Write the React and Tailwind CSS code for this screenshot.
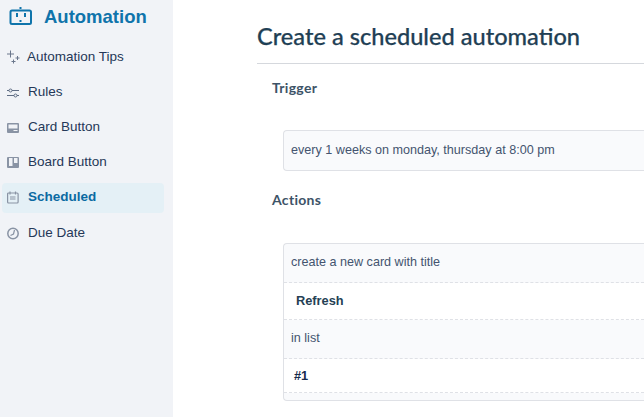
const Sparkle = () => (
  <svg width="14" height="14" viewBox="0 0 14 14" fill="none" stroke="#6b778c" strokeWidth="1">
    <path d="M3.500 0.500v7M0 4h7" />
    <path d="M10.500 6v4M8.500 8h4" />
    <path d="M6.500 9.500v4M4.500 11.500h4" />
  </svg>
);

const Sliders = () => (
  <svg width="14" height="14" viewBox="0 0 14 14" fill="none" stroke="#5e6c84" strokeWidth="1">
    <path d="M0 5.500h2M5 5.500h7M0 10.500h7M10 10.500h2" />
    <circle cx="3.500" cy="5.500" r="1.500" />
    <circle cx="8.500" cy="10.500" r="1.500" />
  </svg>
);

const CardIcon = () => (
  <svg width="13" height="13" viewBox="0 0 13 13">
    <rect x="0" y="2" width="12" height="10" rx="1" fill="#8993a4" />
    <rect x="1.500" y="3.500" width="9" height="4" fill="#f1f3f7" />
    <rect x="6.500" y="9" width="4" height="1" fill="#f1f3f7" />
  </svg>
);

const BoardIcon = () => (
  <svg width="13" height="13" viewBox="0 0 13 13">
    <rect x="0" y="1" width="12" height="11" rx="1" fill="#8993a4" />
    <rect x="2" y="2" width="3.500" height="8" fill="#f1f3f7" />
    <rect x="7" y="2" width="3.500" height="5" fill="#f1f3f7" />
  </svg>
);

const CalendarIcon = () => (
  <svg width="13" height="13" viewBox="0 0 13 13" fill="none" stroke="#8993a4" strokeWidth="1.200">
    <rect x="0.600" y="2" width="10.500" height="10" rx="1" />
    <path d="M3 0.500v3M8.500 0.500v3M3 6h5.500M3 8h5.500" />
  </svg>
);

const ClockIcon = () => (
  <svg width="13" height="13" viewBox="0 0 13 13" fill="none" stroke="#8993a4" strokeWidth="1.500">
    <circle cx="6" cy="6.500" r="5.200" />
    <path d="M7.500 3L6.500 7l-3 1.500" strokeWidth="1.200" />
  </svg>
);

const RobotIcon = () => (
  <svg width="24" height="22" viewBox="0 0 24 22" fill="none" className="self-start mt-[7px]">
    <rect x="10.500" y="0" width="2" height="2" fill="#0f74ab" />
    <rect x="1.500" y="3.500" width="20.500" height="13.500" rx="1.500" stroke="#0f74ab" strokeWidth="2" />
    <rect x="7" y="6" width="2" height="4" fill="#0f74ab" />
    <rect x="15" y="6" width="2" height="4" fill="#0f74ab" />
    <rect x="10.500" y="13" width="2" height="2" fill="#0f74ab" />
  </svg>
);

const navItems = [
  { label: "Automation Tips", icon: Sparkle, gap: "gap-[6px]" },
  { label: "Rules", icon: Sliders, gap: "gap-[7px]" },
  { label: "Card Button", icon: CardIcon, gap: "gap-[8px]" },
  { label: "Board Button", icon: BoardIcon, gap: "gap-[8px]" },
  { label: "Scheduled", icon: CalendarIcon, gap: "gap-[8px]", active: true },
  { label: "Due Date", icon: ClockIcon, gap: "gap-[8px]" },
];

const Sidebar = () => (
  <aside className="w-[173px] h-full shrink-0 bg-[#f1f3f7] pl-[2px] pr-[9px]">
    <div className="flex items-center h-[34px] pl-[7px] gap-[11px]">
      <RobotIcon />
      <span className="text-[18.5px] font-bold text-[#0f74ab]">Automation</span>
    </div>
    <nav className="flex flex-col gap-[5px] mt-[8px]">
      {navItems.map((item) => (
        <div
          key={item.label}
          className={`flex items-center h-[30px] pl-[5px] rounded-[4px] ${item.gap} ${item.active ? "bg-[#e4f0f6] font-bold text-[#0b6aa2] mt-[1px] pb-[1px]" : "text-[#253858]"}`}
        >
          <item.icon />
          <span className="text-[13.5px]">{item.label}</span>
        </div>
      ))}
    </nav>
  </aside>
);

const Row = ({ children, className }) => (
  <div className={`border-b border-dashed border-[#dfe1e6] ${className}`}>{children}</div>
);

export default function App() {
  return (
    <div className="flex w-[644px] h-[417px] overflow-hidden bg-white font-['Liberation_Sans',sans-serif]">
      <Sidebar />
      <main className="flex-1 pl-[84px] min-w-0">
        <h1 className="pt-[20px] h-[64px] border-b border-[#d5d8dd] text-[23.6px] leading-[33px] font-medium [-webkit-text-stroke:0.25px_#1f3f55] text-[#1f3f55] font-['Lato',sans-serif]">
          Create a scheduled automation
        </h1>
        <div className="pl-[15px]">
          <h2 className="mt-[15px] text-[14px] leading-[18px] font-bold tracking-[0.3px] text-[#3d5367] font-['Lato',sans-serif]">Trigger</h2>
          <div className="mt-[33px] ml-[11px] h-[41px] flex items-center pl-[7px] bg-[#f9fafc] border border-[#dfe1e6] border-r-0 rounded-l-[4px] text-[12.6px] text-[#44546f]">
            every 1 weeks on monday, thursday at 8:00 pm
          </div>
          <h2 className="mt-[20px] text-[14px] leading-[18px] font-bold tracking-[0.3px] text-[#3d5367] font-['Lato',sans-serif]">Actions</h2>
          <div className="mt-[34px] ml-[11px] h-[158px] border border-[#dfe1e6] border-r-0 rounded-l-[4px] bg-[#f9fafc] flex flex-col">
            <Row className="h-[39px] pb-[1px] flex items-center pl-[7px] text-[12.6px] text-[#44546f]">create a new card with title</Row>
            <Row className="h-[37px] flex items-center pl-[12px] bg-white text-[12.8px] font-bold text-[#253f54]">Refresh</Row>
            <Row className="h-[39px] pb-[2px] flex items-center pl-[7px] text-[12.6px] text-[#44546f]">in list</Row>
            <Row className="h-[34px] flex items-center pl-[10px] bg-white text-[12.8px] font-bold text-[#172b4d]">#1</Row>
          </div>
        </div>
      </main>
    </div>
  );
}
